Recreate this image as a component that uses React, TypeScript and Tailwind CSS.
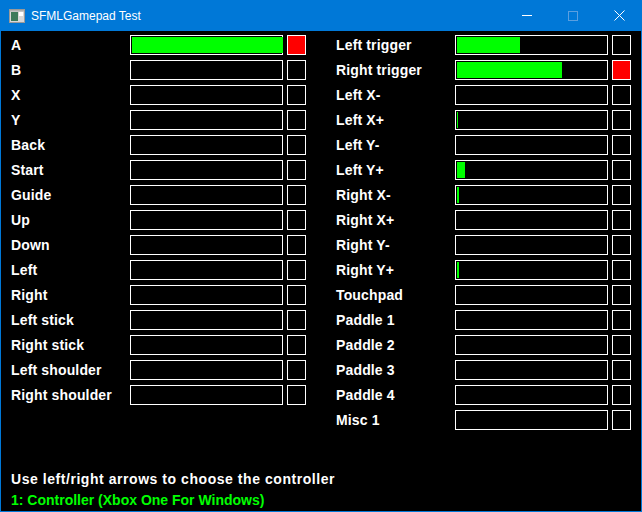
import React from 'react';

type Row = { label: string; fill: number; pressed?: boolean };

const leftRows: Row[] = [
  { label: 'A', fill: 151, pressed: true },
  { label: 'B', fill: 0 },
  { label: 'X', fill: 0 },
  { label: 'Y', fill: 0 },
  { label: 'Back', fill: 0 },
  { label: 'Start', fill: 0 },
  { label: 'Guide', fill: 0 },
  { label: 'Up', fill: 0 },
  { label: 'Down', fill: 0 },
  { label: 'Left', fill: 0 },
  { label: 'Right', fill: 0 },
  { label: 'Left stick', fill: 0 },
  { label: 'Right stick', fill: 0 },
  { label: 'Left shoulder', fill: 0 },
  { label: 'Right shoulder', fill: 0 },
];

const rightRows: Row[] = [
  { label: 'Left trigger', fill: 63 },
  { label: 'Right trigger', fill: 105, pressed: true },
  { label: 'Left X-', fill: 0 },
  { label: 'Left X+', fill: 1 },
  { label: 'Left Y-', fill: 0 },
  { label: 'Left Y+', fill: 8 },
  { label: 'Right X-', fill: 2 },
  { label: 'Right X+', fill: 0 },
  { label: 'Right Y-', fill: 0 },
  { label: 'Right Y+', fill: 2 },
  { label: 'Touchpad', fill: 0 },
  { label: 'Paddle 1', fill: 0 },
  { label: 'Paddle 2', fill: 0 },
  { label: 'Paddle 3', fill: 0 },
  { label: 'Paddle 4', fill: 0 },
  { label: 'Misc 1', fill: 0 },
];

function GamepadRow({ row }: { row: Row }) {
  return (
    <div className="flex h-[25px] items-start">
      <div className="w-[119px] h-[20px] flex items-center text-[14px] font-bold text-white leading-none tracking-[0.15px]">
        {row.label}
      </div>
      <div className="w-[153px] h-[20px] border border-white p-px">
        <div className="h-full bg-[#00ff00]" style={{ width: row.fill }} />
      </div>
      <div className={`ml-[4px] w-[19px] h-[20px] border border-white ${row.pressed ? 'bg-[#ff0000]' : ''}`} />
    </div>
  );
}

export default function App() {
  return (
    <div
      className="w-[642px] h-[512px] bg-[#0078d7] flex flex-col"
      style={{ fontFamily: '"Liberation Sans", Arial, sans-serif' }}
    >
      {/* title bar */}
      <div className="h-[31px] flex items-center text-white shrink-0">
        <svg width="16" height="14" viewBox="0 0 16 14" className="ml-[9px]">
          <rect x="0.5" y="0.5" width="15" height="13" fill="#d8d8d8" stroke="#9a9a9a" />
          <rect x="2" y="3" width="7" height="9" fill="#3c7a5a" />
          <rect x="10" y="3" width="4" height="4" fill="#ffffff" />
          <rect x="1" y="1" width="14" height="1.5" fill="#b0b0b0" />
        </svg>
        <span className="ml-[6px] text-[12px]">SFMLGamepad Test</span>
        <div className="ml-auto flex h-full items-center">
          <div className="w-[46px] h-full flex items-center justify-center">
            <div className="w-[10px] h-px bg-white" />
          </div>
          <div className="w-[46px] h-full flex items-center justify-center">
            <div className="w-[10px] h-[10px] border border-[#5a9fe0]" />
          </div>
          <div className="w-[46px] h-full flex items-center justify-center">
            <svg width="11" height="11" viewBox="0 0 11 11">
              <path d="M0.5 0.5 L10.5 10.5 M10.5 0.5 L0.5 10.5" stroke="white" strokeWidth="1" />
            </svg>
          </div>
        </div>
      </div>
      {/* content */}
      <div className="flex-1 mx-px mb-px bg-black flex flex-col">
        <div className="flex pt-[4px] pl-[10px]">
          <div className="flex flex-col">
            {leftRows.map((r) => (
              <GamepadRow key={r.label} row={r} />
            ))}
          </div>
          <div className="flex flex-col ml-[30px]">
            {rightRows.map((r) => (
              <GamepadRow key={r.label} row={r} />
            ))}
          </div>
        </div>
        <div className="mt-auto pl-[10px] text-[14px] font-bold leading-[21px]">
          <div className="text-white tracking-[0.55px]">Use left/right arrows to choose the controller</div>
          <div className="text-[#00ff00]">1: Controller (Xbox One For Windows)</div>
        </div>
      </div>
    </div>
  );
}
